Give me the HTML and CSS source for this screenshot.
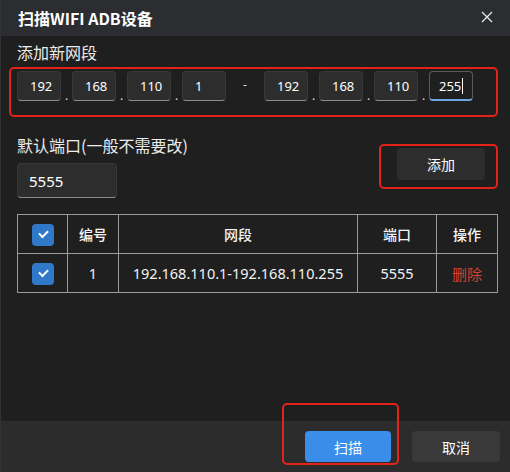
FILE: index.html
```html
<!DOCTYPE html>
<html lang="zh-CN">
<head>
    <meta charset="UTF-8">
    <title>扫描WIFI ADB设备</title>
    <link rel="stylesheet" href="styles.css">
</head>
<body>
    <div class="dialog">
        <div class="titlebar">
            <span class="title">扫描WIFI ADB设备</span>
            <svg class="close" width="12" height="12" viewBox="0 0 12 12">
                <path d="M1 1L11 11M11 1L1 11" stroke="#e8e8e8" stroke-width="1.3" fill="none"/>
            </svg>
        </div>

        <div class="content">
            <div class="label">添加新网段</div>
            <div class="ip-row">
                <span class="mark mark-ip"></span>
                <div class="ip-group">
                    <input class="ip" value="192"><span class="dot">.</span>
                    <input class="ip" value="168"><span class="dot">.</span>
                    <input class="ip" value="110"><span class="dot">.</span>
                    <input class="ip" value="1">
                </div>
                <span class="dash">-</span>
                <div class="ip-group">
                    <input class="ip" value="192"><span class="dot">.</span>
                    <input class="ip" value="168"><span class="dot">.</span>
                    <input class="ip" value="110"><span class="dot">.</span>
                    <div class="ip focused">255<span class="caret"></span></div>
                </div>
            </div>

            <div class="port-row">
                <div class="port-col">
                    <div class="label">默认端口(一般不需要改)</div>
                    <input class="port" value="5555">
                </div>
                <div class="add-wrap">
                    <span class="mark mark-add"></span>
                    <button class="btn">添加</button>
                </div>
            </div>

            <table class="list">
                <tr>
                    <th class="c-check"><span class="check"></span></th>
                    <th class="c-no">编号</th>
                    <th class="c-range">网段</th>
                    <th class="c-port">端口</th>
                    <th class="c-op">操作</th>
                </tr>
                <tr>
                    <td><span class="check"></span></td>
                    <td>1</td>
                    <td>192.168.110.1-192.168.110.255</td>
                    <td>5555</td>
                    <td class="del">删除</td>
                </tr>
            </table>
        </div>

        <div class="footer">
            <div class="scan-wrap">
                <span class="mark mark-scan"></span>
                <button class="btn primary">扫描</button>
            </div>
            <button class="btn cancel">取消</button>
        </div>
    </div>
</body>
</html>
```

FILE: styles.css
```css
body {
    margin: 0;
    padding: 0;
    background: #1f1f1f;
    font-family: "Noto Sans", "Noto Sans CJK SC", sans-serif;
    color: #f2f2f2;
}

.dialog {
    width: 510px;
    height: 472px;
    background: #1f1f1f;
    display: flex;
    flex-direction: column;
    box-sizing: border-box;
    border-left: 1px solid #333;
}

.titlebar {
    height: 36px;
    flex: none;
    background: #2b2d31;
    display: flex;
    align-items: center;
    justify-content: space-between;
    padding: 0 17px 0 17px;
}

.title {
    font-family: "Noto Sans CJK SC", sans-serif;
    font-size: 16px;
    font-weight: bold;
    color: #fff;
}

.close {
    margin-top: -2px;
}

.content {
    flex: 1;
    padding: 5px 12px 0 16px;
}

.label {
    font-family: "Noto Sans CJK SC", sans-serif;
    font-size: 16px;
    line-height: 22px;
    color: #ececec;
}

/* ip inputs */
.ip-row {
    position: relative;
    display: flex;
    align-items: flex-start;
    margin-top: 8px;
    height: 30px;
}

.ip-group {
    display: flex;
    align-items: flex-end;
}

input {
    font-family: "Noto Sans", sans-serif;
    background: #2d2d2d;
    color: #fff;
    border: 1px solid #383838;
    border-bottom-color: #8c8c8c;
    border-radius: 4px;
    box-sizing: border-box;
    outline: none;
}

.ip {
    width: 44px;
    height: 30px;
    padding: 0 0 0 12px;
    font-size: 13px;
}

.ip.focused {
    font-family: "Noto Sans", sans-serif;
    display: flex;
    align-items: center;
    box-sizing: border-box;
    color: #fff;
    border: 1px solid #5a5a5a;
    border-bottom: 2px solid #6fa7e0;
    border-radius: 4px;
    background: #1f1f1f;
    padding: 1px 0 0 9px;
}

.caret {
    display: inline-block;
    width: 1px;
    height: 16px;
    margin-left: 1px;
    background: #fff;
}

.dot {
    width: 11px;
    text-align: center;
    font-size: 12px;
    line-height: 10px;
    color: #ddd;
}

.dash {
    width: 38px;
    text-align: center;
    font-size: 12px;
    line-height: 28px;
    color: #ddd;
}

/* port + add */
.port-row {
    display: flex;
    justify-content: space-between;
    margin-top: 33px;
}

.port {
    display: block;
    margin-top: 7px;
    width: 100px;
    height: 35px;
    padding: 0 0 0 11px;
    font-size: 15px;
}

.add-wrap {
    position: relative;
    margin-top: 14px;
    margin-right: 13px;
    height: 32px;
}

.btn {
    font-family: "Noto Sans CJK SC", sans-serif;
    font-size: 14px;
    color: #fff;
    background: #2d2d2d;
    border: none;
    border-radius: 4px;
    width: 88px;
    height: 32px;
    cursor: pointer;
}

/* table */
.list {
    margin-top: 16px;
    width: 481px;
    border-collapse: collapse;
    font-family: "Noto Sans", "Noto Sans CJK SC", sans-serif;
}

.list th,
.list td {
    border: 1px solid #9a9a9a;
    height: 38px;
    padding: 0;
    text-align: center;
    color: #f4f4f4;
}

.list th {
    font-family: "Noto Sans CJK SC", sans-serif;
    font-size: 14px;
    font-weight: 500;
}

.list td {
    font-size: 14.5px;
}

.c-check { width: 49px; }
.c-no { width: 50px; }
.c-range { width: 238px; }
.c-port { width: 78px; }

.check {
    display: inline-block;
    width: 22px;
    height: 22px;
    border-radius: 4px;
    background: #3078c8;
    vertical-align: middle;
    position: relative;
}

.check::after {
    content: "";
    position: absolute;
    left: 7px;
    top: 6px;
    width: 7px;
    height: 4px;
    border-left: 2px solid #fff;
    border-bottom: 2px solid #fff;
    transform: rotate(-45deg);
}

.list td.del {
    font-family: "Noto Sans CJK SC", sans-serif;
    color: #d9402f;
    font-size: 15px;
}

/* footer */
.footer {
    height: 51px;
    flex: none;
    background: #2c2c2c;
    display: flex;
    justify-content: flex-end;
    align-items: center;
    gap: 21px;
    padding-right: 10px;
}

.scan-wrap {
    position: relative;
    height: 31px;
}

.btn.primary {
    background: #3a8ee9;
    width: 86px;
    height: 31px;
}

.btn.cancel {
    background: #393939;
    height: 31px;
}

/* red annotation frames */
.mark {
    position: absolute;
    border: 2.5px solid #e3221c;
    border-radius: 5px;
    pointer-events: none;
}

.mark-ip {
    left: -8px;
    top: -4px;
    width: 485px;
    height: 46px;
}

.mark-add {
    left: -18px;
    top: -4px;
    width: 115px;
    height: 41px;
}

.mark-scan {
    left: -23px;
    top: -28px;
    width: 113px;
    height: 58px;
}
```
